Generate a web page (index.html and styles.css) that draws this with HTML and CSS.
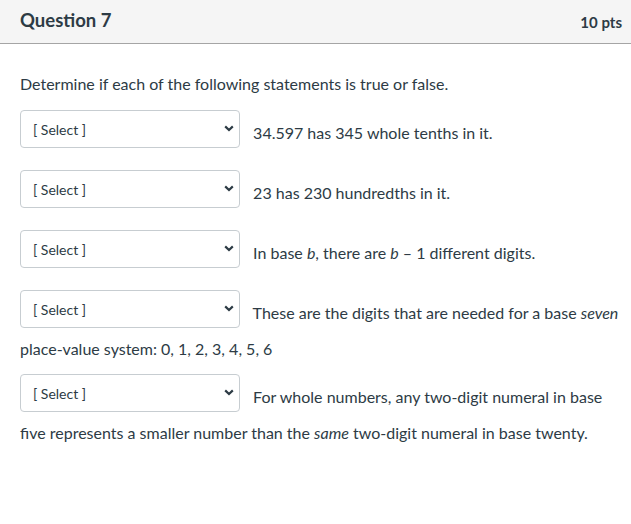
FILE: index.html
```html
<!DOCTYPE html>
<html lang="en">
<head>
<meta charset="utf-8">
<title>Question 7</title>
<link rel="stylesheet" href="styles.css">
</head>
<body>
<div class="question">
  <div class="header">
    <span class="name">Question 7</span>
    <span class="points">10 pts</span>
  </div>
  <div class="content">
    <p class="intro">Determine if each of the following statements is true or false.</p>
    <p class="stmt"><span class="sel"><select><option>[ Select ]</option><option>True</option><option>False</option></select><svg class="chev" width="10" height="7" viewBox="0 0 10 7"><polyline points="1.2,1.4 5,5 8.8,1.4" fill="none" stroke="#2d3b45" stroke-width="2.2"/></svg></span> 34.597 has 345 whole tenths in it.</p>
    <p class="stmt"><span class="sel"><select><option>[ Select ]</option><option>True</option><option>False</option></select><svg class="chev" width="10" height="7" viewBox="0 0 10 7"><polyline points="1.2,1.4 5,5 8.8,1.4" fill="none" stroke="#2d3b45" stroke-width="2.2"/></svg></span> 23 has 230 hundredths in it.</p>
    <p class="stmt"><span class="sel"><select><option>[ Select ]</option><option>True</option><option>False</option></select><svg class="chev" width="10" height="7" viewBox="0 0 10 7"><polyline points="1.2,1.4 5,5 8.8,1.4" fill="none" stroke="#2d3b45" stroke-width="2.2"/></svg></span> In base <em>b</em>, there are <em>b</em> – 1 different digits.</p>
    <p class="stmt"><span class="sel"><select><option>[ Select ]</option><option>True</option><option>False</option></select><svg class="chev" width="10" height="7" viewBox="0 0 10 7"><polyline points="1.2,1.4 5,5 8.8,1.4" fill="none" stroke="#2d3b45" stroke-width="2.2"/></svg></span> These are the digits that are needed for a base <em>seven</em> place-value system: 0, 1, 2, 3, 4, 5, 6</p>
    <p class="stmt"><span class="sel"><select><option>[ Select ]</option><option>True</option><option>False</option></select><svg class="chev" width="10" height="7" viewBox="0 0 10 7"><polyline points="1.2,1.4 5,5 8.8,1.4" fill="none" stroke="#2d3b45" stroke-width="2.2"/></svg></span> For whole numbers, any two-digit numeral in base five represents a smaller number than the <em>same</em> two-digit numeral in base twenty.</p>
  </div>
</div>
</body>
</html>
```

FILE: styles.css
```css
html, body {
  margin: 0;
  padding: 0;
  background: #ffffff;
}

body {
  font-family: Lato, "Liberation Sans", sans-serif;
  color: #2d3b45;
  font-size: 16px;
  line-height: 24px;
}

.header {
  display: flex;
  justify-content: space-between;
  align-items: center;
  height: 44px;
  box-sizing: border-box;
  padding: 0 9px 0 20px;
  background: #f5f5f5;
  border-bottom: 1px solid #a5a5a5;
}

.name {
  font-weight: 700;
  font-size: 18.5px;
  line-height: 24px;
  padding-bottom: 3px;
}

.points {
  font-weight: 700;
  font-size: 15px;
  line-height: 24px;
}

.content {
  padding: 28px 10px 0 20px;
}

.content p {
  margin: 13px 0;
}

.content .intro {
  margin-top: 0;
  margin-bottom: 14px;
}

.sel {
  position: relative;
  display: inline-block;
  vertical-align: 4px;
  margin: 0 9px 9px 0;
}

.sel select {
  appearance: none;
  -webkit-appearance: none;
  width: 220px;
  height: 38px;
  box-sizing: border-box;
  margin: 0;
  padding: 0 24px 0 12px;
  border: 1px solid #c7cdd1;
  border-radius: 4px;
  background: #ffffff;
  color: #2d3b45;
  font-family: Lato, "Liberation Sans", sans-serif;
  font-size: 14px;
  vertical-align: baseline;
}

.chev {
  position: absolute;
  right: 6px;
  top: 15px;
  pointer-events: none;
}

em {
  font-style: italic;
}
```
